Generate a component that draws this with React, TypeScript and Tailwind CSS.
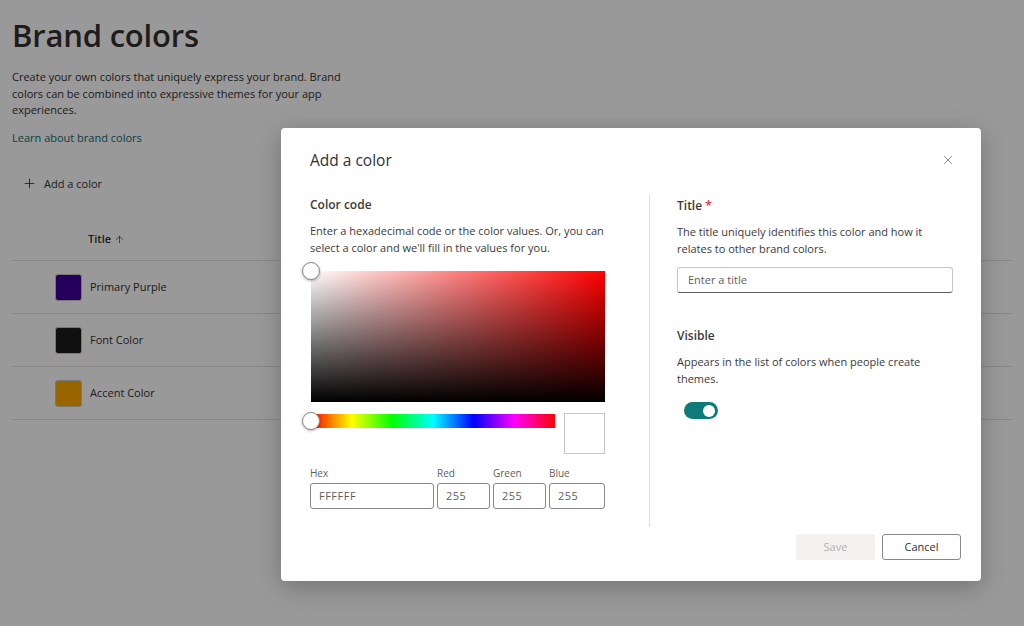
import { Plus, ArrowUp, X } from 'lucide-react';

const colors = [
  { title: 'Primary Purple', swatch: 'bg-[#3f0096]' },
  { title: 'Font Color', swatch: 'bg-[#1b1b1b]' },
  { title: 'Accent Color', swatch: 'bg-[#ffa800]' },
];

function ColorField({ label, value, width }: { label: string; value: string; width: string }) {
  return (
    <div className={`flex shrink-0 flex-col ${width}`}>
      <span className="mb-[3px] text-[10px] leading-[14px] text-[#605e5c]">{label}</span>
      <div className="flex h-[26px] items-center rounded-[3px] border border-[#8a8886] px-[8px] text-[11px] tracking-[0.5px] text-[#605e5c]">
        {value}
      </div>
    </div>
  );
}

export default function App() {
  return (
    <div className="relative h-[626px] w-[1024px] overflow-hidden bg-white font-['Open_Sans',sans-serif] text-[#323130]">
      {/* page behind the dialog */}
      <div className="px-[12px] pt-[14px]">
        <h1 className="text-[31px] font-semibold leading-[42px] tracking-[-0.2px]">Brand colors</h1>
        <p className="mt-[13px] w-[340px] text-[11px] leading-[16.5px]">
          Create your own colors that uniquely express your brand. Brand colors can be combined into expressive
          themes for your app experiences.
        </p>
        <a className="mt-[11px] block text-[11px] leading-[16px] text-[#0f6c6c]">Learn about brand colors</a>
        <button className="mt-[30px] flex items-center gap-[7px] pl-[10px] text-[11px] font-medium">
          <Plus className="h-[15px] w-[15px]" strokeWidth={1.4} />
          Add a color
        </button>
        <div className="mt-[26px]">
          <div className="flex h-[43px] items-center border-b border-[#e1dfdd] pl-[76px] text-[11px] font-semibold">
            Title
            <ArrowUp className="ml-[3px] h-[11px] w-[11px]" strokeWidth={1.5} />
          </div>
          {colors.map((c) => (
            <div key={c.title} className="flex h-[53px] items-center gap-[8px] border-b border-[#e1dfdd] pl-[43px] text-[11px]">
              <div className={`h-[27px] w-[27px] rounded-[3px] border border-[#c8c6c4] ${c.swatch}`} />
              {c.title}
            </div>
          ))}
        </div>
      </div>

      {/* overlay */}
      <div className="absolute inset-0 bg-black/40" />

      {/* dialog */}
      <div className="absolute left-[281px] top-[128px] flex h-[453px] w-[700px] flex-col rounded-[4px] bg-white shadow-[0_6px_24px_rgba(0,0,0,0.25)]">
        <div className="flex items-center justify-between pl-[29px] pr-[26px] pt-[21px]">
          <h2 className="text-[15.5px] font-medium leading-[22px] text-[#323130]">Add a color</h2>
          <X className="h-[14px] w-[14px] text-[#605e5c]" strokeWidth={1.3} />
        </div>

        <div className="mt-[24px] flex flex-1">
          {/* left column */}
          <div className="w-[324px] shrink-0 pl-[29px]">
            <h3 className="text-[12px] font-semibold leading-[20px] text-[#3b3a39]">Color code</h3>
            <p className="mt-[7px] text-[11px] leading-[17px] text-[#3b3a39]">
              Enter a hexadecimal code or the color values. Or, you can select a color and we'll fill in the values for
              you.
            </p>
            <div className="relative ml-[1px] mt-[15px] h-[131px] w-[294px] bg-[linear-gradient(to_right,#ffffff,#ff0000)]">
              <div className="absolute inset-0 bg-[linear-gradient(to_bottom,transparent,#000000)]" />
              <div className="absolute left-[-9px] top-[-9px] h-[18px] w-[18px] rounded-full border border-[#8a8886] bg-white shadow-[0_1px_3px_rgba(0,0,0,0.3)]" />
            </div>
            <div className="mt-[11px] flex items-start">
              <div className="relative ml-[1px] mt-[1px] h-[14px] w-[244px] shrink-0 bg-[linear-gradient(to_right,#ff0000,#ffff00,#00ff00,#00ffff,#0000ff,#ff00ff,#ff0000)]">
                <div className="absolute left-[-9px] top-[-2px] h-[18px] w-[18px] rounded-full border border-[#8a8886] bg-white shadow-[0_1px_3px_rgba(0,0,0,0.3)]" />
              </div>
              <div className="ml-[9px] h-[41px] w-[41px] shrink-0 border border-[#c8c6c4] bg-white" />
            </div>
            <div className="mt-[12px] flex gap-[3px]">
              <ColorField label="Hex" value="FFFFFF" width="w-[124px]" />
              <ColorField label="Red" value="255" width="w-[53px]" />
              <ColorField label="Green" value="255" width="w-[53px]" />
              <ColorField label="Blue" value="255" width="w-[56px]" />
            </div>
          </div>

          {/* divider */}
          <div className="mb-[7px] ml-[44px] w-px shrink-0 bg-[#e1dfdd]" />

          {/* right column */}
          <div className="w-[302px] shrink-0 pl-[27px] pt-[1px]">
            <h3 className="text-[12px] font-semibold leading-[20px] text-[#3b3a39]">
              Title <span className="text-[#d13438]">*</span>
            </h3>
            <p className="mt-[7px] text-[11px] leading-[17px] text-[#3b3a39]">
              The title uniquely identifies this color and how it relates to other brand colors.
            </p>
            <div className="mt-[10px] flex h-[26px] w-[276px] items-center rounded-[3px] border border-[#c8c6c4] border-b-[#605e5c] px-[10px] text-[11px] text-[#605e5c]">
              Enter a title
            </div>
            <h3 className="mt-[33px] text-[12px] font-semibold leading-[20px] text-[#3b3a39]">Visible</h3>
            <p className="mt-[7px] text-[11px] leading-[17px] text-[#3b3a39]">
              Appears in the list of colors when people create themes.
            </p>
            <div className="ml-[7px] mt-[15px] flex h-[17px] w-[34px] items-center justify-end rounded-full bg-[#0f7b78] pr-[3px]">
              <div className="h-[12px] w-[12px] rounded-full bg-white" />
            </div>
          </div>
        </div>

        <div className="flex justify-end gap-[7px] pb-[21px] pr-[20px]">
          <button className="h-[26px] w-[79px] rounded-[3px] bg-[#f3f2f1] text-[11px] font-medium text-[#b3b0ad]">Save</button>
          <button className="h-[26px] w-[79px] rounded-[3px] border border-[#8a8886] bg-white text-[11px] font-medium text-[#323130]">
            Cancel
          </button>
        </div>
      </div>
    </div>
  );
}
